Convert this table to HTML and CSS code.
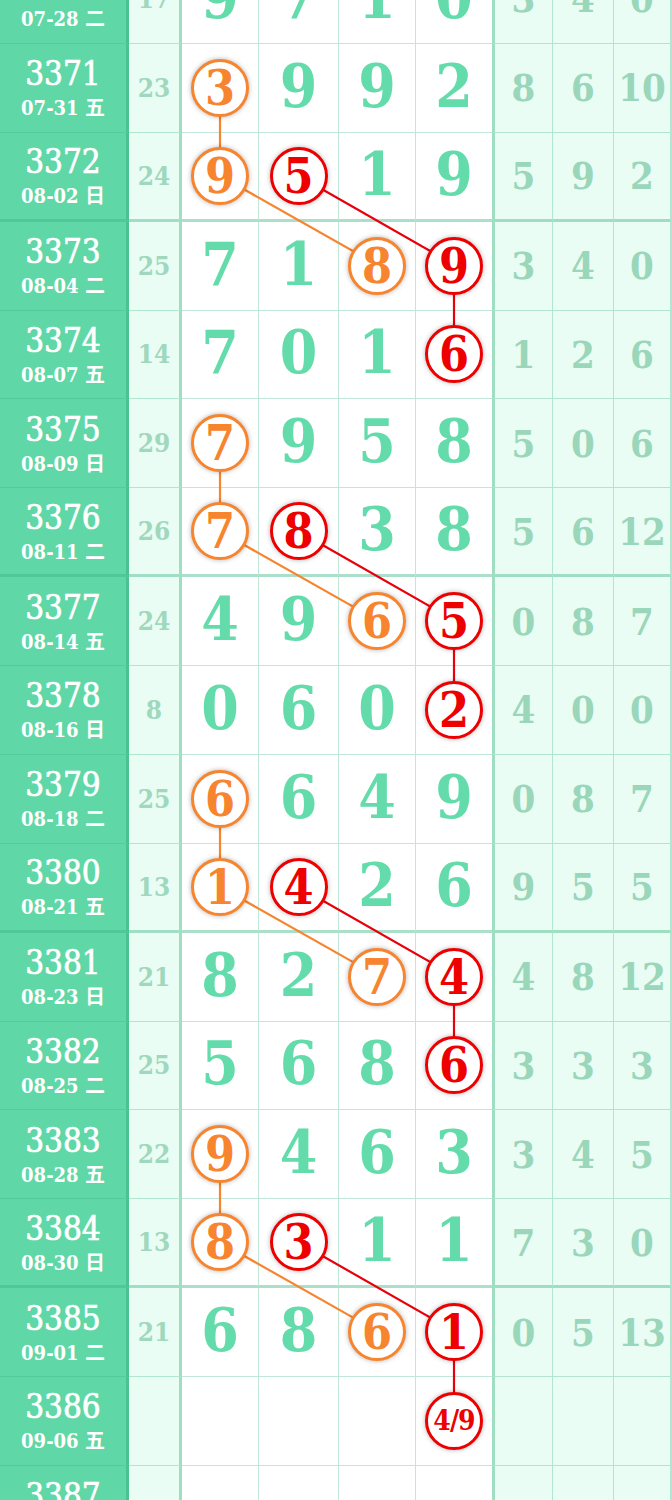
FILE: index.html
```html
<!DOCTYPE html>
<html lang="zh">
<head>
<meta charset="utf-8">
<title>走势图</title>
<link rel="stylesheet" href="styles.css">
</head>
<body>
<div class="chart">
  <svg class="links" width="671" height="1600" viewBox="0 0 671 1600">
    <g class="o">
      <polyline points="220,131.875 220,220.75 377,309.625"/>
      <polyline points="220,487.375 220,576.25 377,665.125"/>
      <polyline points="220,842.875 220,931.75 377,1020.625"/>
      <polyline points="220,1198.375 220,1287.25 377,1376.125"/>
    </g>
    <g class="r">
      <polyline points="298.5,220.75 454,309.625 454,398.5"/>
      <polyline points="298.5,576.25 454,665.125 454,754"/>
      <polyline points="298.5,931.75 454,1020.625 454,1109.5"/>
      <polyline points="298.5,1287.25 454,1376.125 454,1465"/>
    </g>
  </svg>

  <div class="row">
    <div class="issue"><span class="no">3370</span><span class="date">07-28 二</span></div>
    <div class="sum">17</div>
    <div class="d">9</div><div class="d">7</div><div class="d">1</div><div class="d">0</div>
    <div class="x first">3</div><div class="x">4</div><div class="x">0</div>
  </div>
  <div class="row">
    <div class="issue"><span class="no">3371</span><span class="date">07-31 五</span></div>
    <div class="sum">23</div>
    <div class="d"><span class="ball o">3</span></div><div class="d">9</div><div class="d">9</div><div class="d">2</div>
    <div class="x first">8</div><div class="x">6</div><div class="x">10</div>
  </div>
  <div class="row sep">
    <div class="issue"><span class="no">3372</span><span class="date">08-02 日</span></div>
    <div class="sum">24</div>
    <div class="d"><span class="ball o">9</span></div><div class="d"><span class="ball r">5</span></div><div class="d">1</div><div class="d">9</div>
    <div class="x first">5</div><div class="x">9</div><div class="x">2</div>
  </div>
  <div class="row">
    <div class="issue"><span class="no">3373</span><span class="date">08-04 二</span></div>
    <div class="sum">25</div>
    <div class="d">7</div><div class="d">1</div><div class="d"><span class="ball o">8</span></div><div class="d"><span class="ball r">9</span></div>
    <div class="x first">3</div><div class="x">4</div><div class="x">0</div>
  </div>
  <div class="row">
    <div class="issue"><span class="no">3374</span><span class="date">08-07 五</span></div>
    <div class="sum">14</div>
    <div class="d">7</div><div class="d">0</div><div class="d">1</div><div class="d"><span class="ball r">6</span></div>
    <div class="x first">1</div><div class="x">2</div><div class="x">6</div>
  </div>
  <div class="row">
    <div class="issue"><span class="no">3375</span><span class="date">08-09 日</span></div>
    <div class="sum">29</div>
    <div class="d"><span class="ball o">7</span></div><div class="d">9</div><div class="d">5</div><div class="d">8</div>
    <div class="x first">5</div><div class="x">0</div><div class="x">6</div>
  </div>
  <div class="row sep">
    <div class="issue"><span class="no">3376</span><span class="date">08-11 二</span></div>
    <div class="sum">26</div>
    <div class="d"><span class="ball o">7</span></div><div class="d"><span class="ball r">8</span></div><div class="d">3</div><div class="d">8</div>
    <div class="x first">5</div><div class="x">6</div><div class="x">12</div>
  </div>
  <div class="row">
    <div class="issue"><span class="no">3377</span><span class="date">08-14 五</span></div>
    <div class="sum">24</div>
    <div class="d">4</div><div class="d">9</div><div class="d"><span class="ball o">6</span></div><div class="d"><span class="ball r">5</span></div>
    <div class="x first">0</div><div class="x">8</div><div class="x">7</div>
  </div>
  <div class="row">
    <div class="issue"><span class="no">3378</span><span class="date">08-16 日</span></div>
    <div class="sum">8</div>
    <div class="d">0</div><div class="d">6</div><div class="d">0</div><div class="d"><span class="ball r">2</span></div>
    <div class="x first">4</div><div class="x">0</div><div class="x">0</div>
  </div>
  <div class="row">
    <div class="issue"><span class="no">3379</span><span class="date">08-18 二</span></div>
    <div class="sum">25</div>
    <div class="d"><span class="ball o">6</span></div><div class="d">6</div><div class="d">4</div><div class="d">9</div>
    <div class="x first">0</div><div class="x">8</div><div class="x">7</div>
  </div>
  <div class="row sep">
    <div class="issue"><span class="no">3380</span><span class="date">08-21 五</span></div>
    <div class="sum">13</div>
    <div class="d"><span class="ball o">1</span></div><div class="d"><span class="ball r">4</span></div><div class="d">2</div><div class="d">6</div>
    <div class="x first">9</div><div class="x">5</div><div class="x">5</div>
  </div>
  <div class="row">
    <div class="issue"><span class="no">3381</span><span class="date">08-23 日</span></div>
    <div class="sum">21</div>
    <div class="d">8</div><div class="d">2</div><div class="d"><span class="ball o">7</span></div><div class="d"><span class="ball r">4</span></div>
    <div class="x first">4</div><div class="x">8</div><div class="x">12</div>
  </div>
  <div class="row">
    <div class="issue"><span class="no">3382</span><span class="date">08-25 二</span></div>
    <div class="sum">25</div>
    <div class="d">5</div><div class="d">6</div><div class="d">8</div><div class="d"><span class="ball r">6</span></div>
    <div class="x first">3</div><div class="x">3</div><div class="x">3</div>
  </div>
  <div class="row">
    <div class="issue"><span class="no">3383</span><span class="date">08-28 五</span></div>
    <div class="sum">22</div>
    <div class="d"><span class="ball o">9</span></div><div class="d">4</div><div class="d">6</div><div class="d">3</div>
    <div class="x first">3</div><div class="x">4</div><div class="x">5</div>
  </div>
  <div class="row sep">
    <div class="issue"><span class="no">3384</span><span class="date">08-30 日</span></div>
    <div class="sum">13</div>
    <div class="d"><span class="ball o">8</span></div><div class="d"><span class="ball r">3</span></div><div class="d">1</div><div class="d">1</div>
    <div class="x first">7</div><div class="x">3</div><div class="x">0</div>
  </div>
  <div class="row">
    <div class="issue"><span class="no">3385</span><span class="date">09-01 二</span></div>
    <div class="sum">21</div>
    <div class="d">6</div><div class="d">8</div><div class="d"><span class="ball o">6</span></div><div class="d"><span class="ball r">1</span></div>
    <div class="x first">0</div><div class="x">5</div><div class="x">13</div>
  </div>
  <div class="row">
    <div class="issue"><span class="no">3386</span><span class="date">09-06 五</span></div>
    <div class="sum"></div>
    <div class="d"></div><div class="d"></div><div class="d"></div><div class="d"><span class="ball r small">4/9</span></div>
    <div class="x first"></div><div class="x"></div><div class="x"></div>
  </div>
  <div class="row">
    <div class="issue"><span class="no">3387</span><span class="date">09-08 日</span></div>
    <div class="sum"></div>
    <div class="d"></div><div class="d"></div><div class="d"></div><div class="d"></div>
    <div class="x first"></div><div class="x"></div><div class="x"></div>
  </div>
</div>
</body>
</html>
```

FILE: styles.css
```css
html, body {
  margin: 0;
  padding: 0;
  background: #ffffff;
  overflow: hidden;
}

.chart {
  position: relative;
  width: 671px;
  margin-top: -45px;
  font-family: "DejaVu Serif Condensed", "DejaVu Serif", serif;
  font-stretch: condensed;
}

.links {
  position: absolute;
  left: 0;
  top: 0;
  z-index: 1;
  pointer-events: none;
}

.links polyline {
  fill: none;
  stroke-width: 2.2;
}

.links .o polyline { stroke: #f7842e; }
.links .r polyline { stroke: #e8000b; }

.row {
  display: grid;
  grid-template-columns: 129px 53px 77px 80px 77px 76px 61px 61px 57px;
  height: 88.875px;
}

.row > div {
  box-sizing: border-box;
  display: flex;
  align-items: center;
  justify-content: center;
  border-bottom: 1px solid rgba(60, 180, 130, 0.32);
  border-right: 1px solid rgba(60, 180, 130, 0.32);
}

.row.sep > div {
  border-bottom: 3px solid rgba(60, 180, 130, 0.42);
}

.issue {
  background: #5fd7a6;
  flex-direction: column;
  color: #ffffff;
  border-right: 3px solid rgba(50, 170, 120, 0.45) !important;
}

.issue .no {
  font-size: 33px;
  line-height: 36px;
  font-weight: normal;
  -webkit-text-stroke: 0.7px #ffffff;
}

.issue .date {
  font-family: "DejaVu Serif Condensed", "DejaVu Serif", "Noto Sans CJK SC", serif;
  font-size: 20px;
  line-height: 22px;
  font-weight: bold;
  margin-top: 5px;
}

.sum {
  background: #e9fdf4;
  color: #9fd8bd;
  font-size: 26px;
  font-weight: bold;
  border-right: 3px solid rgba(60, 180, 130, 0.42) !important;
}

.d {
  background: #ffffff;
  color: #63dbab;
  font-size: 60px;
  font-weight: bold;
  line-height: 1;
  padding-bottom: 4px;
}

.row > .d:nth-child(6) {
  border-right: none;
}

.x {
  background: #e9fdf4;
  color: #9ad6b9;
  font-size: 38px;
  font-weight: bold;
}

.x.first {
  border-left: 3px solid rgba(60, 180, 130, 0.42);
}

.ball {
  position: relative;
  z-index: 2;
  box-sizing: border-box;
  width: 58px;
  height: 58px;
  border-radius: 50%;
  background: #ffffff;
  border: 3px solid currentColor;
  display: flex;
  align-items: center;
  justify-content: center;
  font-size: 48px;
  line-height: 1;
  box-shadow: 0 0 5px rgba(0, 0, 0, 0.3);
  margin-top: 4px;
}

.ball.o { color: #f7842e; }
.ball.r { color: #ee0000; }

.ball.small {
  font-size: 28px;
  letter-spacing: -1px;
}
```
